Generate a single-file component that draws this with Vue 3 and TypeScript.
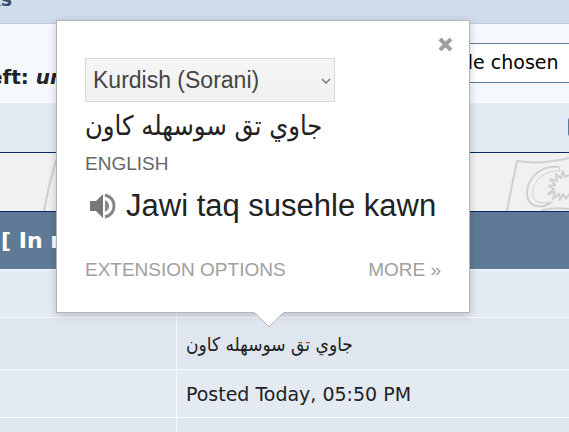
<script setup lang="ts">
import { ref } from 'vue'

interface Row {
  label: string
  text: string
  rtl: boolean
}

const rows: Row[] = [
  { label: '', text: '', rtl: false },
  { label: '', text: 'جاوي تق سوسهله كاون', rtl: true },
  { label: '', text: 'Posted Today, 05:50 PM', rtl: false },
  { label: '', text: '', rtl: false },
]

const language = ref('Kurdish (Sorani)')
const open = ref(true)
</script>

<template>
  <main class="page">
    <header class="bar"><span>ks</span></header>

    <section class="upload">
      <p class="quota">eft: <em>un</em></p>
      <input class="file" type="file" aria-label="Attachment" />
    </section>

    <section class="actions">
      <button class="attach" type="button" aria-label="Add attachment"></button>
    </section>

    <section class="banner">
      <svg class="fold" width="20" height="58" viewBox="0 0 20 58" fill="none" stroke="#cfcfcf" stroke-width="2">
        <path d="M16 7L9 33L4 58" />
      </svg>
      <svg class="flag" width="65" height="58" viewBox="0 0 65 58" fill="none" stroke="#d0d0d0" stroke-width="2" stroke-linejoin="round">
        <path d="M3 58L7 37L13 8Q36 12 65 5" />
        <path d="M55 14C42 12 29 19 24 33C20 48 28 55 40 53L47 50" />
        <path d="M55 14L56 18C45 17 34 23 30 33C26 45 31 50 40 50L49 49" stroke-width="1" />
        <path d="M38 57Q53 54 65 56" />
        <path d="M65 22L61 24L59 18L57 25L52 21L53 28L46 26L51 32L45 33L50 36L44 41L51 39L49 46L55 41L56 47L59 41L62 46L65 41" />
      </svg>
    </section>

    <h2 class="title">[ In reply to ]</h2>

    <table class="posts">
      <tbody>
        <tr v-for="(row, i) in rows" :key="i">
          <th scope="row">{{ row.label }}</th>
          <td><span :dir="row.rtl ? 'rtl' : 'ltr'" :class="{ arabic: row.rtl }">{{ row.text }}</span></td>
        </tr>
      </tbody>
    </table>

    <aside v-if="open" class="bubble">
      <button class="close" type="button" aria-label="Close" @click="open = false">
        <svg width="15" height="15" viewBox="0 0 15 15" stroke="#a0a0a0" stroke-width="4"><path d="M2 2L13 13M13 2L2 13" /></svg>
      </button>
      <div class="picker">
        <select v-model="language" aria-label="Source language">
          <option>Kurdish (Sorani)</option>
          <option>Arabic</option>
        </select>
        <svg class="chevron" width="10" height="6" viewBox="0 0 10 6" fill="none" stroke="#777" stroke-width="1.5"><path d="M1 1L5 5L9 1" /></svg>
      </div>
      <p class="source"><span class="arabic" dir="rtl">جاوي تق سوسهله كاون</span></p>
      <p class="lang">ENGLISH</p>
      <div class="result">
        <button class="speak" type="button" aria-label="Listen">
          <svg width="27" height="26" viewBox="0 0 27 26">
            <path d="M0 8H6L13 1V25L6 18H0Z" fill="#777" />
            <path d="M15 7Q19 9 19 13Q19 17 15 19Z" fill="#888" />
            <path d="M15 2C22 4 24 8 24 13S22 22 15 24" fill="none" stroke="#858585" stroke-width="3" />
          </svg>
        </button>
        <p>Jawi taq susehle kawn</p>
      </div>
      <nav class="links">
        <a href="#options">EXTENSION OPTIONS</a>
        <a href="#more">MORE »</a>
      </nav>
      <svg class="tail" width="30" height="16" viewBox="0 0 30 16">
        <path d="M0 0H30L15 15Z" fill="#fff" />
        <path d="M1 1L15 15L29 1" fill="none" stroke="#b5b5b5" />
      </svg>
    </aside>
  </main>
</template>

<style>
body {
  margin: 0;
  background: #dfe6ef;
}
</style>

<style scoped>
* {
  box-sizing: border-box;
}

.page {
  position: relative;
  height: 100vh;
  overflow: hidden;
  color: #222;
  font: 19px/24px "DejaVu Sans", Verdana, sans-serif;
}

p,
h2 {
  margin: 0;
}

button {
  padding: 0;
  border: 0;
  background: none;
}

.bar {
  display: flex;
  align-items: flex-end;
  height: 24px;
  padding-bottom: 12px;
  border-bottom: 1px solid #bccad8;
  background: #d0dcea;
  color: #3a4f6c;
  font-weight: bold;
}

.bar span {
  margin-left: -12px;
}

.upload {
  display: flex;
  justify-content: space-between;
  height: 79px;
  padding-top: 19px;
  background: #f5f9fd;
}

.quota {
  margin-left: -11px;
  padding-top: 22px;
  font-weight: bold;
  font-size: 20px;
  white-space: nowrap;
}

.file {
  width: 300px;
  height: 40px;
  margin-right: -10px;
  border: 1px solid #5f7a97;
  background: #fff;
  color: #000;
  font: inherit;
  line-height: 36px;
}

.file::file-selector-button {
  width: 130px;
  margin-right: 14px;
}

.actions {
  display: flex;
  justify-content: flex-end;
  padding: 14px 0 15px;
  background: #e4eaf2;
}

.attach {
  width: 20px;
  height: 20px;
  margin-right: -19px;
  border: 1px solid #5f7a97;
  border-radius: 3px;
}

.banner {
  display: flex;
  justify-content: space-between;
  height: 60px;
  padding-left: 40px;
  border: solid #072a66;
  border-width: 1px 0;
  background: #f1f1f1;
}

.title {
  height: 57px;
  padding-left: 1px;
  background: #5f7a97;
  color: #fff;
  font-size: 22px;
  line-height: 57px;
}

.posts {
  width: 100%;
  border-collapse: collapse;
  table-layout: fixed;
}

.posts th,
.posts td {
  height: 48px;
  padding: 0 9px;
  border-top: 1px solid #f5f9fd;
  text-align: left;
}

.posts th {
  width: 31%;
  border-right: 1px solid #f5f9fd;
}

.posts tr {
  background: #e4eaf2;
}

.posts tr:nth-child(even) {
  background: #dfe6ef;
}

.posts tr:nth-child(2) td {
  height: 52px;
}

.posts span {
  display: inline-block;
}

.arabic {
  display: inline-block;
  font-family: "DejaVu Sans Condensed", "DejaVu Sans", sans-serif;
}

.bubble {
  position: absolute;
  top: 20px;
  left: 56px;
  width: 414px;
  padding: 37px 28px 28px;
  border: 1px solid #b5b5b5;
  background: #fff;
  box-shadow: 0 2px 8px rgba(0, 0, 0, 0.2);
  font-family: "Liberation Sans", Arial, sans-serif;
}

.close {
  position: absolute;
  top: 16px;
  right: 16px;
  width: 15px;
  height: 15px;
}

.close svg,
.speak svg {
  display: block;
}

.picker {
  position: relative;
  width: 250px;
}

.picker select {
  display: block;
  width: 100%;
  height: 44px;
  padding: 0 7px;
  appearance: none;
  border: 1px solid #d9d9d9;
  border-radius: 0;
  background: linear-gradient(#f5f5f5, #f0f0f0);
  color: #444;
  font: 23px "Liberation Sans", Arial, sans-serif;
}

.chevron {
  position: absolute;
  top: 20px;
  right: 4px;
  pointer-events: none;
}

.source {
  font-size: 27px;
  line-height: 48px;
}

.lang {
  color: #666;
  line-height: 28px;
}

.result {
  display: flex;
  align-items: center;
  gap: 9px;
  height: 56px;
  padding-left: 5px;
  white-space: nowrap;
  font-size: 31px;
  line-height: 40px;
}

.links {
  display: flex;
  justify-content: space-between;
  padding-top: 22px;
  line-height: 28px;
}

.links a {
  color: #a0a0a0;
  text-decoration: none;
}

.tail {
  position: absolute;
  top: 100%;
  left: 197px;
}
</style>
